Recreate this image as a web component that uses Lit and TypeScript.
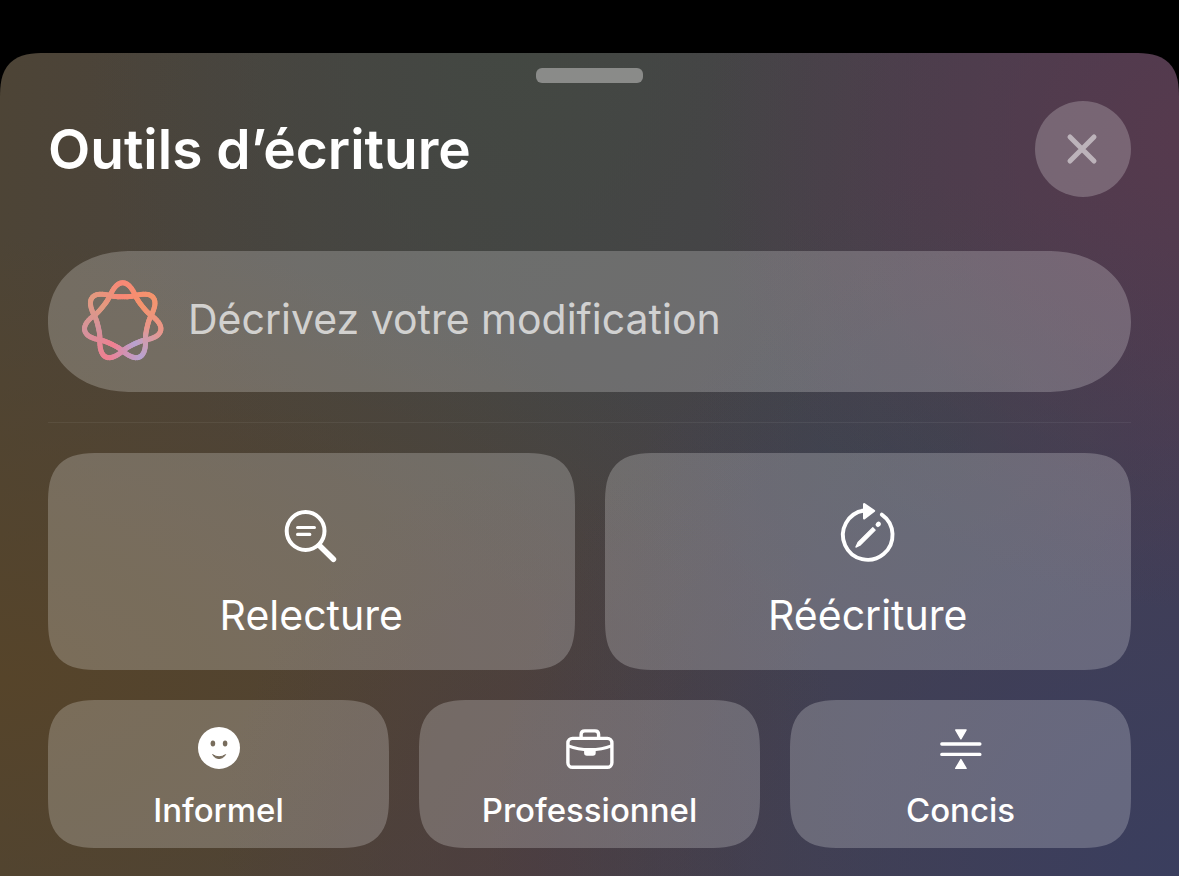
import { LitElement, html, css, svg } from "lit";
import { customElement } from "lit/decorators.js";

type RGB = [number, number, number];
type Point = [number, number];

const LOBES = 7;

/* Colours around the knot, clockwise from the top, evenly spaced. */
const RING: RGB[] = [
  [248, 136, 118],
  [244, 148, 108],
  [234, 150, 136],
  [184, 162, 208],
  [240, 128, 144],
  [212, 146, 156],
  [226, 154, 128],
];

const ringColour = (turn: number): string => {
  const t = (((turn % 1) + 1) % 1) * RING.length;
  const a = RING[Math.floor(t) % RING.length];
  const b = RING[(Math.floor(t) + 1) % RING.length];
  const f = t - Math.floor(t);
  return `rgb(${a.map((v, i) => Math.round(v + (b[i] - v) * f)).join(",")})`;
};

/* Right half of a petal and of the inner arc below it, as cubic curves from the centre line. */
const PETAL: Point[] = [[0, -39], [5.6, -39], [9.8, -32.8], [12.7, -26.3]];
const ARC: Point[] = [[0, -25], [5, -25], [8.4, -25.2], [12.7, -26.3]];

const cubic = (p: Point[], t: number): Point => {
  const u = 1 - t;
  const w = [u * u * u, 3 * u * u * t, 3 * u * t * t, t * t * t];
  return [0, 1].map((k) => p.reduce((sum, q, i) => sum + q[k] * w[i], 0)) as Point;
};

const place = (p: Point[], t: number, lobe: number): Point => {
  const [x0, y] = cubic(p, Math.abs(t));
  const x = t < 0 ? -x0 : x0;
  const a = (lobe / LOBES) * Math.PI * 2;
  return [40.7 + x * Math.cos(a) - y * Math.sin(a), 40.8 + x * Math.sin(a) + y * Math.cos(a)];
};

const STEPS = 8;
const knot = [ARC, PETAL].flatMap((shape) =>
  Array.from({ length: LOBES * STEPS * 2 }, (_, i) => {
    const lobe = Math.floor(i / (STEPS * 2));
    const t = ((i % (STEPS * 2)) - STEPS) / STEPS;
    const [x1, y1] = place(shape, t, lobe);
    const [x2, y2] = place(shape, t + 1 / STEPS, lobe);
    return { x1, y1, x2, y2, colour: ringColour((lobe + t / 2) / LOBES) };
  })
);

const knotIcon = html`<svg class="knot" viewBox="0 0 82 82" aria-hidden="true">
  ${knot.map(
    (s) => svg`<line x1=${s.x1.toFixed(2)} y1=${s.y1.toFixed(2)} x2=${s.x2.toFixed(2)} y2=${s.y2.toFixed(2)} stroke=${s.colour}></line>`
  )}
</svg>`;

const proofread = html`<svg viewBox="0 0 60 60" fill="none" stroke="currentColor" stroke-linecap="round" aria-hidden="true">
  <circle cx="24.6" cy="28" r="18.9" stroke-width="4" />
  <path d="M38.4 42.5 52.4 56.3" stroke-width="5.6" />
  <path d="M16.6 24.5H33.4M16.6 31.4H28.8" stroke-width="3.2" />
</svg>`;

const rewrite = html`<svg viewBox="0 0 60 60" fill="none" stroke="currentColor" stroke-linecap="round" stroke-linejoin="round" aria-hidden="true">
  <path d="M43.8 11.6A24.8 24.8 0 1 1 26 7.5" stroke-width="3.9" />
  <path d="M26.2 1.2 36 7.9 26.2 15.2Z" fill="currentColor" stroke-width="2.4" />
  <path d="M17.9 44.1 20 39.5 34.8 24.7 37.2 27.1 22.4 41.9Z" fill="currentColor" stroke-width="1.2" />
  <path d="M39.9 21.7 40.6 21" stroke-width="4.6" />
</svg>`;

const friendly = html`<svg viewBox="0 0 48 48" aria-hidden="true">
  <mask id="face">
    <rect width="48" height="48" fill="#fff" />
    <ellipse cx="17.9" cy="18.4" rx="2.3" ry="3" />
    <ellipse cx="30.1" cy="18.4" rx="2.3" ry="3" />
    <path d="M17.6 29.6Q24 34 30.6 29.6Q28.4 33.6 24 33.6T17.6 29.6Z" stroke="#000" stroke-width="1" stroke-linejoin="round" />
  </mask>
  <circle cx="24" cy="22.9" r="21" fill="currentColor" mask="url(#face)" />
</svg>`;

const professional = html`<svg viewBox="0 0 48 48" fill="none" stroke="currentColor" stroke-width="3.4" aria-hidden="true">
  <rect x="1.9" y="13.4" width="44" height="28.9" rx="4.6" />
  <path d="M15.1 13V9.6Q15.1 5.9 18.8 5.9H28.9Q32.6 5.9 32.6 9.6V13" />
  <path d="M2.3 20.8Q11.7 24.6 23.9 24.6T45.5 20.8" stroke-width="3" />
  <path d="M18.1 24H29.7V28Q29.7 30.8 26.9 30.8H20.9Q18.1 30.8 18.1 28Z" fill="currentColor" stroke="none" />
</svg>`;

const concise = html`<svg viewBox="0 0 48 48" fill="none" stroke="currentColor" stroke-linecap="round" stroke-linejoin="round" aria-hidden="true">
  <path d="M4.8 19H42.9M4.8 29.4H42.9" stroke-width="3.3" />
  <path d="M18.7 5H29.1L23.9 13.8ZM18.7 43.4H29.1L23.9 34.6Z" fill="currentColor" stroke-width="1.4" />
</svg>`;

const cross = html`<svg class="cross" viewBox="0 0 36 36" aria-hidden="true">
  <path d="M5 6 29 30M29 6 5 30" />
</svg>`;

@customElement("app-root")
export class AppRoot extends LitElement {
  static styles = css`
    :host {
      display: flex;
      flex-direction: column;
      box-sizing: border-box;
      min-height: 100vh;
      padding-top: 53px;
      background: #000;
      color: #fff;
      font-family: Inter, "Liberation Sans", sans-serif;
    }
    .sheet {
      flex: 1;
      display: flex;
      flex-direction: column;
      padding: 15px 48px 28px;
      border-radius: 36px 36px 0 0;
      background:
        radial-gradient(circle at 100% 10%, rgba(88, 57, 77, 0.85) 0, rgba(88, 57, 77, 0) 34%),
        radial-gradient(circle at 100% 100%, #3a3e5e 0, rgba(58, 62, 94, 0) 48%),
        radial-gradient(circle at 80% 46%, rgba(60, 72, 74, 0.7) 0, rgba(60, 72, 74, 0) 24%),
        radial-gradient(ellipse at 46% 100%, rgba(78, 60, 64, 0.7) 0, rgba(78, 60, 64, 0) 36%),
        radial-gradient(ellipse at 0% 76%, #56442a 0, rgba(86, 68, 42, 0) 50%),
        radial-gradient(ellipse at 44% 0%, rgba(67, 72, 66, 0.95) 0, rgba(67, 72, 66, 0) 46%),
        linear-gradient(90deg, #4d4436 0, #454347 48%, #473e50 100%);
    }
    .grabber {
      align-self: center;
      width: 107px;
      height: 15px;
      border-radius: 6px;
      background: #8a8b89;
    }
    .header {
      display: flex;
      align-items: center;
      justify-content: space-between;
      margin: 18px 0 54px;
    }
    .title {
      margin: 0;
      font-size: 55px;
      line-height: 64px;
      font-weight: 600;
    }
    button {
      border: 0;
      padding: 0;
      color: inherit;
      font-family: inherit;
      background: rgba(255, 255, 255, 0.22);
      cursor: pointer;
    }
    .close {
      display: grid;
      place-items: center;
      width: 96px;
      height: 96px;
      border-radius: 50%;
    }
    .cross {
      width: 36px;
      height: 36px;
      fill: none;
      stroke: rgba(255, 255, 255, 0.5);
      stroke-width: 5;
      stroke-linecap: round;
    }
    .field {
      display: flex;
      align-items: center;
      gap: 24px;
      height: 141px;
      padding: 0 34px;
      border-radius: 76px / 71px;
      background: rgba(255, 255, 255, 0.22);
    }
    .knot {
      flex: none;
      width: 82px;
      height: 82px;
      overflow: visible;
      stroke-width: 5;
      stroke-linecap: round;
    }
    .prompt {
      flex: 1;
      min-width: 0;
      height: 56px;
      padding: 0 0 6px;
      border: 0;
      outline: 0;
      background: none;
      color: #fff;
      font: 400 41px / 50px Inter, "Liberation Sans", sans-serif;
    }
    .prompt::placeholder {
      color: rgba(255, 255, 255, 0.7);
      opacity: 1;
    }
    .rule {
      width: 100%;
      height: 1px;
      margin: 30px 0;
      border: 0;
      background: rgba(255, 255, 255, 0.06);
    }
    .row {
      display: grid;
      grid-auto-flow: column;
      grid-auto-columns: minmax(0, 1fr);
      gap: 30px;
    }
    .row + .row {
      margin-top: 30px;
    }
    .tile {
      display: flex;
      flex-direction: column;
      align-items: center;
      border-radius: 38px;
    }
    .tile svg {
      overflow: visible;
    }
    .large {
      gap: 28px;
      padding: 50px 0 31px;
      font-size: 41px;
      line-height: 48px;
    }
    .large svg {
      width: 60px;
      height: 60px;
    }
    .small {
      gap: 17px;
      padding: 25px 0 18px;
      font-size: 33px;
      line-height: 40px;
      font-weight: 500;
    }
    .small svg {
      width: 48px;
      height: 48px;
    }
    /* Continuous corners where the browser can draw them. */
    @supports (corner-shape: squircle) {
      .sheet {
        border-radius: 46px 46px 0 0;
        corner-shape: superellipse(1.5);
      }
      .tile {
        border-radius: 52px;
        corner-shape: superellipse(1.5);
      }
      .field {
        border-radius: 84px / 71px;
        corner-shape: superellipse(1.1);
      }
    }
  `;

  render() {
    return html`
      <main class="sheet">
        <div class="grabber"></div>
        <header class="header">
          <h1 class="title">Outils d’écriture</h1>
          <button class="close" aria-label="Fermer">${cross}</button>
        </header>
        <label class="field">
          ${knotIcon}
          <input class="prompt" type="text" placeholder="Décrivez votre modification" aria-label="Décrivez votre modification" />
        </label>
        <hr class="rule" />
        <div class="row">
          <button class="tile large">${proofread}<span>Relecture</span></button>
          <button class="tile large">${rewrite}<span>Réécriture</span></button>
        </div>
        <div class="row">
          <button class="tile small">${friendly}<span>Informel</span></button>
          <button class="tile small">${professional}<span>Professionnel</span></button>
          <button class="tile small">${concise}<span>Concis</span></button>
        </div>
      </main>
    `;
  }
}
